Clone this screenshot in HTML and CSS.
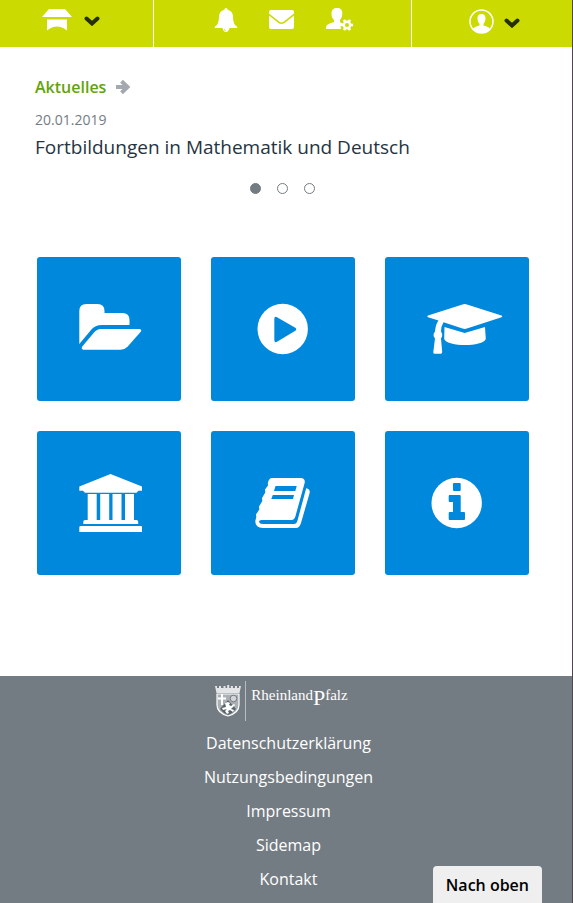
FILE: index.html
```html
<!DOCTYPE html>
<html lang="de">
<head>
<meta charset="utf-8">
<meta name="viewport" content="width=device-width, initial-scale=1">
<title>Bildungsportal Rheinland-Pfalz</title>
<link rel="stylesheet" href="styles.css">
</head>
<body>
<header class="topbar">
  <button class="topbar-cell topbar-school" type="button" aria-label="Schule">
    <svg width="30" height="22" viewBox="0 0 30 22"><path fill="#fff" d="M7 0h16l7 8H0zM5 10.500h20V21.500q-10-8-20 0z"/></svg>
    <svg class="chevron" width="16" height="10" viewBox="0 0 16 10"><path d="M2.500 2.500 8 7.500l5.500-5"/></svg>
  </button>
  <nav class="topbar-cell topbar-tools" aria-label="Werkzeuge">
    <a href="#mitteilungen" aria-label="Mitteilungen">
      <svg width="24" height="26" viewBox="0 0 24 26"><path fill="#fff" d="M12 1q1.500 0 1.700 1.700C17 3.500 18.800 6 19 9c.2 6 1 9 4 10.500q1 1.500-1 1.500h-6.500q-.8 4-3.500 4t-3.500-4H2q-2 0-1-1.500C4 18 4.800 15 5 9c.2-3 2-5.500 5.300-6.300Q10.500 1 12 1z"/><path d="M10.300 22q0 1.600 1.500 1.700" fill="none" stroke="#cbda00" stroke-width=".7"/></svg>
    </a>
    <a href="#nachrichten" aria-label="Nachrichten">
      <svg width="26" height="20" viewBox="0 0 26 20"><path fill="#fff" d="M2 0h21q2 0 2 2v1.500l-10.500 8.200q-2 1.400-4 0L0 3.500V2Q0 0 2 0zM0 5.500l9.500 7.600q3 2 6 0L25 5.500V17q0 2-2 2H2q-2 0-2-2z"/></svg>
    </a>
    <a href="#einstellungen" aria-label="Profil bearbeiten">
      <svg width="28" height="26" viewBox="0 0 28 26"><path fill="#fff" d="M11 1c3.500 0 5.500 2 5.300 5.500-.1 3-.8 4.500-2.300 6.500v2.200l3 1.300q-4 2.500-1.500 5.500H0c0-4.500 2-5 8-7V13C6 11 5.500 9.500 5.500 6.500 5.500 3 7.500 1 11 1z"/><circle cx="21" cy="18" r="3.200" fill="none" stroke="#fff" stroke-width="2.400"/><path stroke="#fff" stroke-width="2.600" d="M24.500 18h2.500M15 18h2.500M22.700 21l1.300 2.200M18 12.800l1.300 2.200M19.300 21 18 23.200M24 12.800 22.700 15"/></svg>
    </a>
  </nav>
  <button class="topbar-cell topbar-user" type="button" aria-label="Benutzerkonto">
    <svg width="25" height="25" viewBox="0 0 25 25"><circle cx="12.500" cy="12.500" r="11.500" fill="none" stroke="#fff" stroke-width="1.500"/><path fill="#fff" d="M12.500 5c3 0 4.200 2 4 4.500-.1 2.500-.8 4-2 5.300v1.700c4 1 5.500 1.700 6.500 3.500-4.500 5-12.500 5-17 0 1-1.800 2.500-2.500 6.500-3.500v-1.700c-1.200-1.300-1.900-2.800-2-5.300-.2-2.500 1-4.500 4-4.500z"/></svg>
    <svg class="chevron" width="16" height="10" viewBox="0 0 16 10"><path d="M2.500 2.500 8 7.500l5.500-5"/></svg>
  </button>
</header>

<main>
  <section class="news">
    <a class="news-heading" href="#aktuelles">Aktuelles
      <svg width="16" height="16" viewBox="0 0 16 16"><path fill="none" stroke="#a3a9ae" stroke-width="4" d="M1 8h11M6.500 2.200l6 5.800-6 5.800"/></svg>
    </a>
    <time class="news-date" datetime="2019-01-20">20.01.2019</time>
    <h2 class="news-title">Fortbildungen in Mathematik und Deutsch</h2>
    <div class="dots">
      <button class="dot dot-active" type="button" aria-label="Meldung 1"></button>
      <button class="dot" type="button" aria-label="Meldung 2"></button>
      <button class="dot" type="button" aria-label="Meldung 3"></button>
    </div>
  </section>

  <nav class="tiles" aria-label="Angebote">
    <a class="tile" href="#dateien" aria-label="Dateien">
      <svg viewBox="0 0 144 144"><path d="M42.300 54q0-7 7-7H60.500q7 0 7 7v2H85.500q7 0 7 7v5H65q-7 0-11 5L42.300 87z"/><path d="M63.500 72H102.500q3 .5 1 3L90.500 89.700q-3 3-7 3H46.500q-3-.5-1-3.500L57 75.500q3-3.500 6.500-3.500z"/></svg>
    </a>
    <a class="tile" href="#medien" aria-label="Medien">
      <svg viewBox="0 0 144 144"><circle cx="71.700" cy="72" r="25.200"/><path class="cut" d="M63.300 62q0-3 2.700-1.800l18.300 10.500q2 1.500 0 3L66 84.800q-2.700 1.200-2.700-1.800z"/></svg>
    </a>
    <a class="tile" href="#kurse" aria-label="Kurse">
      <svg viewBox="0 0 144 144"><path d="M77.500 47.500q2.200-.8 4.400 0L116.500 58.600q1.600.8 0 1.600L81.900 71.500q-2.200.8-4.400 0L58.500 65.200q-2.500 4-2.500 9.300 2.500 3.500 0 7L57.200 95q0 1.700-1.500 1.700h-6.200q-1.500 0-1.200-1.700L50 81.500q-3-3.500 0-7 .5-7 3.500-11L43 60.200q-1.600-.8 0-1.600z"/><path d="m59.500 70 20.200 6 20.300-6 .8 12c-3 8-38.500 8-41.600 0z"/></svg>
    </a>
    <a class="tile" href="#schulen" aria-label="Schulen">
      <svg viewBox="0 0 144 144"><path d="M73.500 43 105 55.500V59.700h-3.500l-2 2H48l-2-2h-3.700V55.500zM50.700 63h9v26h-9zM63.200 63h9v26h-9zM75.500 63h9v26h-9zM88 63h9v26h-9z"/><path d="M48 89h51.500q1.700 0 1.700 1.700V93H46.300v-2.300Q46.300 89 48 89zM43.700 95H104q1 0 1 1v5H42.300v-4.600q0-1.400 1.400-1.400z"/></svg>
    </a>
    <a class="tile" href="#bibliothek" aria-label="Bibliothek">
      <svg viewBox="0 0 144 144"><path d="M61 47H89.500q5.500.5 4 5.500L84.500 85q-1 4-4 4H50.500q-3.500.5-2 2.700Q49.300 93 52 93H83q2.500 0 3.500-3.500L95.200 57.300q4.500 1 3.300 5.200L90 92q-1.500 5-5 5H52q-8-.5-7.700-7L45.300 86 45 83.500 48.300 78.500 48 75.500 51.300 70 51 67 54.300 61.500 54 58.500 57 54.500 56.800 52Q58 47 61 47z"/><path class="cut" d="M64.500 55H85.700L84.300 60H63zM61.800 64H83L82 68H60.300z"/></svg>
    </a>
    <a class="tile" href="#hilfe" aria-label="Informationen">
      <svg viewBox="0 0 144 144"><circle cx="71.700" cy="72" r="25.200"/><path class="cut" d="M69 52h5.700q1 0 1 1v6q0 1-1 1H69q-1 0-1-1v-6q0-1 1-1zM64.700 64h10q1 0 1 1V81H79q1 0 1 1v6q0 1-1 1H64.700q-1 0-1-1v-6q0-1 1-1H68V71h-3.300q-1 0-1-1v-5q0-1 1-1z"/></svg>
    </a>
  </nav>
</main>

<footer class="footer">
  <a class="brand" href="#rlp">
    <svg width="26" height="32" viewBox="0 0 26 32"><path fill="#fff" d="M0 1h2v2h2V1h2v2h2.500V1h2v2h1.700V0h2v3h1.700V1h2v2H20V1h2v2h2V1h2l-1.500 7h-23z" opacity=".8"/><path fill="#abb0b5" stroke="#fff" stroke-width="1.200" d="M2 9h22v11q0 8-11 11Q2 28 2 20z"/><path stroke="#fff" stroke-width="2" d="M7 9v11M3 13.500h8"/><circle cx="18.500" cy="13.500" r="3.300" fill="#d3d6d9" stroke="#747c83"/><path fill="#59636b" d="m13 15-8 9q3 4 8 6 5-2 8-6z"/><path fill="#fff" d="m10 18 3-1 2 1-1 2 2 1 3-2 1 1-3 3-1 1 3 1-1 2-3-2-2 1 1 2-2 1-2-3 2-2-4 1-1-2 4-1z"/></svg>
    <span class="brand-name">Rheinland<span class="brand-initial">P</span>falz</span>
  </a>
  <nav class="footer-links" aria-label="Fußzeile">
    <a href="#datenschutz">Datenschutzerklärung</a>
    <a href="#nutzung">Nutzungsbedingungen</a>
    <a href="#impressum">Impressum</a>
    <a href="#sidemap">Sidemap</a>
    <a href="#kontakt">Kontakt</a>
  </nav>
</footer>
<button class="to-top" type="button">Nach oben</button>
</body>
</html>
```
FILE: styles.css
```css
* {
  box-sizing: border-box;
}

body {
  display: flex;
  flex-direction: column;
  min-height: 100vh;
  margin: 0;
  border-right: 1px solid #51464f;
  background: #fff;
  color: #263442;
  font: 16px/24px "Open Sans", "Noto Sans", sans-serif;
}

a {
  color: inherit;
  text-decoration: none;
}

button {
  margin: 0;
  padding: 0;
  border: 0;
  background: none;
  font: inherit;
  cursor: pointer;
}

svg {
  display: block;
}

.topbar {
  display: grid;
  grid-template-columns: 153fr 259fr 160fr;
  height: 47px;
  background: #cbda00;
}

.topbar-cell {
  display: flex;
  align-items: center;
  justify-content: center;
  padding-bottom: 8px;
}

.topbar-school {
  gap: 12px;
  padding-right: 12px;
}

.topbar-tools {
  gap: 31px;
  padding-left: 2px;
  border: solid #fff;
  border-width: 0 1px;
}

.topbar-user {
  gap: 10px;
  padding-bottom: 4px;
  padding-left: 4px;
}

.chevron {
  fill: none;
  stroke: #25300a;
  stroke-width: 4;
  stroke-linecap: round;
  margin-top: 2px;
}

main {
  padding: 28px 43px 40px 35px;
}

.news {
  display: flex;
  flex-direction: column;
}

.news-heading {
  display: flex;
  align-items: center;
  gap: 9px;
  color: #62a30a;
  font-weight: 600;
}

.news-date {
  margin-top: 9px;
  color: #747c83;
  font-size: 14px;
}

.news-title {
  margin: 2px 0 0;
  font-size: 19px;
  line-height: 26px;
  font-weight: 400;
}

.dots {
  display: flex;
  justify-content: center;
  gap: 16px;
  padding-top: 23px;
}

.dot {
  width: 11px;
  height: 11px;
  border: 1px solid #747c83;
  border-radius: 50%;
}

.dot-active {
  background: #747c83;
}

.tiles {
  display: grid;
  grid-template-columns: repeat(3, 1fr);
  gap: 30px;
  margin: 63px 0 0 2px;
}

.tile {
  aspect-ratio: 1;
  border-radius: 3px;
  background: #0088dd;
  fill: #fff;
}

.tile .cut {
  fill: #0088dd;
}

.footer {
  display: flex;
  flex: 1;
  flex-direction: column;
  align-items: center;
  margin-top: 61px;
  padding: 5px 0 6px 5px;
  background: #747c83;
  color: #fff;
}

.brand {
  display: flex;
  align-items: flex-start;
  gap: 4px;
  margin-right: 14px;
}

.brand svg {
  margin-top: 4px;
}

.brand-name {
  height: 40px;
  padding: 4px 0 0 5px;
  border-left: 1px solid #b9bdc1;
  font: 15px/20px "Liberation Serif", serif;
}

.brand-initial {
  font-size: 22px;
  line-height: 16px;
  vertical-align: -5px;
}

.footer-links {
  display: flex;
  flex-direction: column;
  align-items: center;
  margin-top: 5px;
  line-height: 34px;
}

.to-top {
  position: fixed;
  right: 31px;
  bottom: 0;
  height: 37px;
  padding: 0 13px;
  border-radius: 4px 4px 0 0;
  background: #efefef;
  color: #000;
  font-weight: 600;
}
```
